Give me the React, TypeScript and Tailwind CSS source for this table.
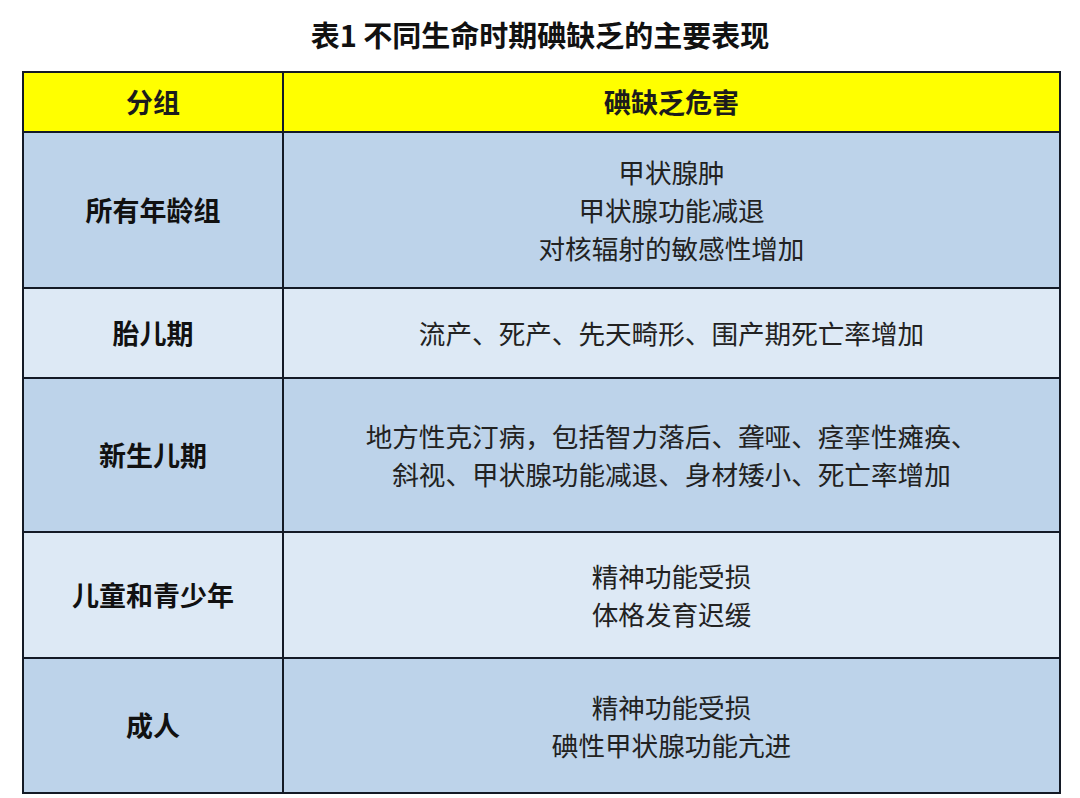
import React from "react";

const rows: { group: string; lines: string[]; h: string; bg: string }[] = [
  { group: "所有年龄组", lines: ["甲状腺肿", "甲状腺功能减退", "对核辐射的敏感性增加"], h: "h-[156px]", bg: "bg-[#bdd3ea]" },
  { group: "胎儿期", lines: ["流产、死产、先天畸形、围产期死亡率增加"], h: "h-[90px]", bg: "bg-[#dde9f5]" },
  { group: "新生儿期", lines: ["地方性克汀病，包括智力落后、聋哑、痉挛性瘫痪、", "斜视、甲状腺功能减退、身材矮小、死亡率增加"], h: "h-[154px]", bg: "bg-[#bdd3ea]" },
  { group: "儿童和青少年", lines: ["精神功能受损", "体格发育迟缓"], h: "h-[126px]", bg: "bg-[#dde9f5]" },
  { group: "成人", lines: ["精神功能受损", "碘性甲状腺功能亢进"], h: "h-[133px]", bg: "bg-[#bdd3ea]" },
];

export default function App() {
  return (
    <div
      className="w-[1080px] h-[798px] bg-white text-[#1c1c1c] overflow-hidden"
      style={{ fontFamily: '"Noto Sans CJK SC", "Noto Sans", sans-serif' }}
    >
      <div className="h-[71px] flex items-center justify-center pb-[2px]">
        <h1 className="text-[29px] font-bold leading-none text-[#111]">表1 不同生命时期碘缺乏的主要表现</h1>
      </div>
      <div className="ml-[22px] w-[1039px] border-2 border-[#141a26] flex flex-col">
        <div className="h-[60px] flex border-b-2 border-[#141a26] bg-[#ffff00]">
          <div className="w-[260px] border-r-2 border-[#141a26] flex items-center justify-center text-[27px] font-bold">分组</div>
          <div className="flex-1 flex items-center justify-center text-[27px] font-bold">碘缺乏危害</div>
        </div>
        {rows.map((r, i) => (
          <div
            key={r.group}
            className={`${r.h} ${r.bg} flex ${i < rows.length - 1 ? "border-b-2 border-[#141a26]" : ""}`}
          >
            <div className="w-[260px] border-r-2 border-[#141a26] flex items-center justify-center text-[27px] font-bold text-[#111]">
              {r.group}
            </div>
            <div className="flex-1 flex flex-col items-center justify-center text-[26.6px] leading-[38px] text-[#222]">
              {r.lines.map((l) => (
                <div key={l}>{l}</div>
              ))}
            </div>
          </div>
        ))}
      </div>
    </div>
  );
}
